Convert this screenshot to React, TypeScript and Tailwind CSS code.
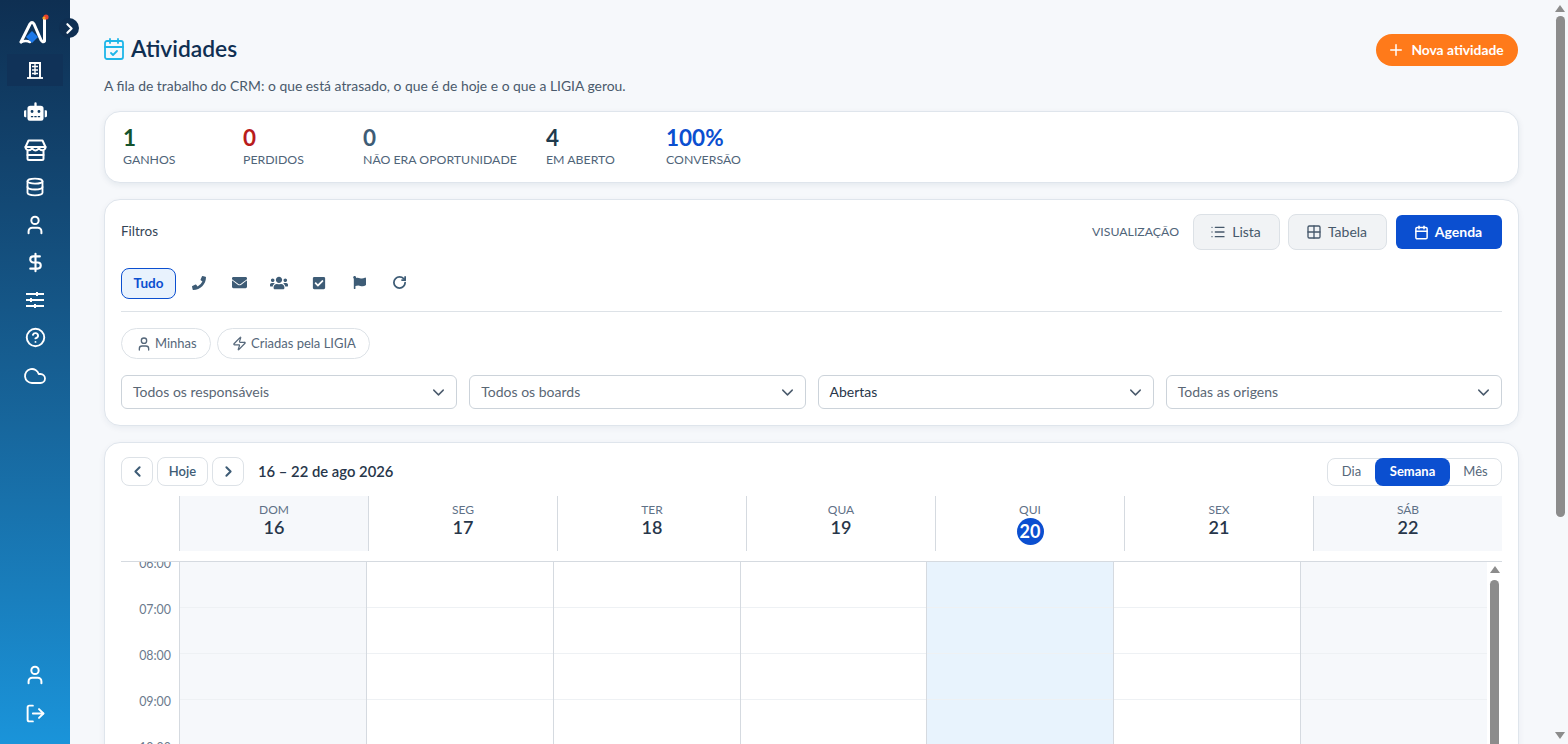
import React from "react";
import { CalendarCheck, Database, User, DollarSign, CircleHelp, Cloud, LogOut, ChevronRight, ChevronLeft, ChevronDown, Plus, List, Grid2x2, Calendar, Zap, RotateCw } from "lucide-react";
import { FaRobot, FaPhoneAlt, FaEnvelope, FaUsers, FaCheckSquare, FaFlag } from "react-icons/fa";

const F = "[font-family:Lato,sans-serif]";

function Stat({ v, l, c, w }: { v: string; l: string; c: string; w: string }) {
  return (
    <div className={w}>
      <div className={`text-[22.5px] leading-[26px] font-bold ${c}`}>{v}</div>
      <div className="mt-[1px] text-[12.3px] leading-[16px] text-[#4f6479] whitespace-nowrap">{l}</div>
    </div>
  );
}

function Sel({ t, dark }: { t: string; dark?: boolean }) {
  return (
    <div className={`flex-1 h-[34px] border border-[#ccd3da] rounded-[6px] bg-white flex items-center justify-between pl-[11px] pr-[8px] text-[14px] ${dark ? "text-[#27364a]" : "text-[#5a6775]"}`}>
      <span className="-mt-[2px]">{t}</span>
      <ChevronDown size={19} strokeWidth={1.8} className="text-[#4a5a6c]" />
    </div>
  );
}

const days = [
  ["DOM", "16", true],
  ["SEG", "17", false],
  ["TER", "18", false],
  ["QUA", "19", false],
  ["QUI", "20", false],
  ["SEX", "21", false],
  ["SÁB", "22", true],
] as const;

const hours = ["06:00", "07:00", "08:00", "09:00", "10:00"];

function Nav({ icon, className = "" }: { icon: React.ReactNode; className?: string }) {
  return <div className={`h-[37.7px] shrink-0 flex items-center justify-center text-white ${className}`}>{icon}</div>;
}

export default function App() {
  return (
    <div className={`h-screen overflow-hidden flex bg-[#f6f8fb] relative ${F}`}>
      <aside className="w-[70px] shrink-0 bg-gradient-to-b from-[#0e2f52] to-[#1a94da] flex flex-col relative">
        <div className="h-[54px] relative shrink-0">
          <svg className="absolute left-[18px] top-[13px]" width="32" height="32" viewBox="0 0 32 32" fill="none">
            <path d="M3 29 L12 11 Q14 8 16 11 L23 27 Q25 30 26.5 28 L26.5 6" stroke="#fff" strokeWidth="3" strokeLinecap="round" strokeLinejoin="round" />
            <path d="M3 29 Q8 27 12 29" stroke="#fff" strokeWidth="2.6" strokeLinecap="round" />
            <path d="M8 24 L14 18 L20 24 L14 30 Z" fill="#1d78e8" />
            <circle cx="28" cy="4" r="2.6" fill="#e8422a" />
            <circle cx="26" cy="5" r="1.6" fill="#f6a623" />
          </svg>
          <div className="absolute left-[59px] top-[18px] w-[20px] h-[20px] rounded-full bg-[#0f2f52] flex items-center justify-center z-10">
            <ChevronRight size={17} strokeWidth={3} className="text-white" />
          </div>
        </div>
        <div className="mx-[7px] h-[32px] bg-[#103258] flex items-center justify-center text-white shrink-0">
          <svg width="16" height="18" viewBox="0 0 16 18" fill="none" stroke="#fff">
            <path d="M3 17V2h10v15" strokeWidth="2" />
            <path d="M0 17h16" strokeWidth="1.8" />
            <path d="M5 5.5h6M5 9h6M5 12.5h6M8 3v11" strokeWidth="1.4" />
          </svg>
        </div>
        <div className="h-[7px] shrink-0" />
        <Nav icon={<FaRobot size={23} />} />
        <Nav
          icon={
            <svg width="23" height="22" viewBox="0 0 23 22" fill="none" stroke="#fff" strokeWidth="2" strokeLinejoin="round" strokeLinecap="round">
              <path d="M4.5 1.5h14l3 6.5H1.5z" />
              <path d="M1.5 8a3.3 3.3 0 0 0 6.6 0 3.4 3.4 0 0 0 6.8 0 3.3 3.3 0 0 0 6.6 0" />
              <path d="M3.5 12v7.5a1.5 1.5 0 0 0 1.5 1.5h13a1.5 1.5 0 0 0 1.5-1.5V12" />
              <path d="M3.5 16h16" />
            </svg>
          }
        />
        <Nav icon={<Database size={20} strokeWidth={2.2} />} />
        <Nav icon={<User size={22} strokeWidth={2.2} />} />
        <Nav icon={<DollarSign size={21} strokeWidth={2.4} />} />
        <Nav
          icon={
            <svg width="20" height="18" viewBox="0 0 20 18" fill="none" stroke="#fff" strokeWidth="2">
              <path d="M1 3h18M1 9h18M1 15h18" />
              <path d="M12 1v4M6 7v4M10 13v4" />
            </svg>
          }
        />
        <Nav icon={<CircleHelp size={21} strokeWidth={2.2} />} />
        <Nav icon={<Cloud size={24} strokeWidth={1.8} />} />
        <div className="flex-1" />
        <Nav icon={<User size={22} strokeWidth={2.2} />} />
        <Nav icon={<LogOut size={21} strokeWidth={2.2} />} className="mb-[12px]" />
      </aside>

      <main className="flex-1 min-w-0 pl-[34px] pr-[49px] pt-[32px]">
        <div className="flex items-start justify-between h-[36px]">
          <div className="flex items-center gap-[5px] h-[34px]">
            <CalendarCheck size={24} strokeWidth={1.8} className="text-[#1fb6e8] -ml-[2px]" />
            <h1 className="text-[22.8px] font-semibold text-[#0f2f52] leading-[34px] -mt-[2px]">Atividades</h1>
          </div>
          <button className="h-[32px] mt-[2px] mr-[1px] w-[142px] pr-[3px] rounded-full bg-[#ff7a1a] text-white text-[13.8px] font-bold flex items-center justify-center gap-[6px]">
            <Plus size={18} />Nova atividade
          </button>
        </div>
        <p className="text-[13.9px] leading-[20px] text-[#4a5a6c] mt-[8px] whitespace-nowrap">A fila de trabalho do CRM: o que está atrasado, o que é de hoje e o que a LIGIA gerou.</p>

        <section className="mt-[15px] h-[72px] bg-white rounded-[16px] border border-[#dfe5ec] shadow-[0_2px_6px_rgba(15,47,82,0.08)] flex pl-[18px] pt-[13px]">
          <Stat v="1" l="GANHOS" c="text-[#14532d]" w="w-[120px]" />
          <Stat v="0" l="PERDIDOS" c="text-[#b91c1c]" w="w-[120px]" />
          <Stat v="0" l="NÃO ERA OPORTUNIDADE" c="text-[#3e5c76]" w="w-[183px]" />
          <Stat v="4" l="EM ABERTO" c="text-[#1f3a4d]" w="w-[120px]" />
          <Stat v="100%" l="CONVERSÃO" c="text-[#0b4fd0]" w="w-[100px]" />
        </section>

        <section className="mt-[16px] bg-white rounded-[16px] border border-[#dfe5ec] shadow-[0_2px_6px_rgba(15,47,82,0.06)] px-[16px] pt-[14px] h-[227px]">
          <div className="flex items-center justify-between h-[36px]">
            <span className="text-[13.5px] leading-[18px] -mt-[2px] text-[#344556]">Filtros</span>
            <div className="flex items-center">
              <span className="text-[12.3px] text-[#4f6479] mr-[14px]">VISUALIZAÇÃO</span>
              <button className="h-[36px] w-[87px] pr-[2px] rounded-[8px] border border-[#dce1e6] bg-[#f1f3f5] text-[#46586b] text-[14px] flex items-center justify-center gap-[6px] mr-[8px]"><List size={16} /><span className="-mt-[2px]">Lista</span></button>
              <button className="h-[36px] w-[99px] pr-[2px] rounded-[8px] border border-[#dce1e6] bg-[#f1f3f5] text-[#46586b] text-[14px] flex items-center justify-center gap-[6px] mr-[9px]"><Grid2x2 size={16} /><span className="-mt-[2px]">Tabela</span></button>
              <button className="h-[34px] w-[106px] pr-[2px] rounded-[6px] bg-[#0b4fd0] text-white text-[14px] font-bold flex items-center justify-center gap-[6px]"><Calendar size={15} strokeWidth={2.4} /><span className="-mt-[2px]">Agenda</span></button>
            </div>
          </div>
          <div className="mt-[18px] flex items-center h-[31px]">
            <button className="w-[55px] h-[31px] rounded-[8px] border border-[#0b4fd0] bg-[#e8f2fd] text-[#0b4fd0] text-[13.5px] font-bold">Tudo</button>
            <div className="flex text-[#3e5c76] items-center -translate-y-px">
              <span className="w-[46px] flex justify-center"><FaPhoneAlt size={14} className="-scale-x-100" /></span>
              <span className="w-[34px] flex justify-center"><FaEnvelope size={15} /></span>
              <span className="w-[46px] flex justify-center"><FaUsers size={18} /></span>
              <span className="w-[34px] flex justify-center"><FaCheckSquare size={14} /></span>
              <span className="w-[46px] flex justify-center"><FaFlag size={13} /></span>
              <span className="w-[34px] flex justify-center"><RotateCw size={15} strokeWidth={2.8} /></span>
            </div>
          </div>
          <div className="mt-[12px] border-t border-[#dde2e7]" />
          <div className="mt-[16px] flex gap-[6px]">
            <div className="h-[31px] rounded-full border border-[#dde2e7] pl-[14px] w-[90px] flex items-center gap-[3px] text-[13px] text-[#55677a]"><User size={16} />Minhas</div>
            <div className="h-[31px] rounded-full border border-[#dde2e7] pl-[14px] w-[153px] flex items-center gap-[4px] text-[13px] text-[#55677a]"><Zap size={15} />Criadas pela LIGIA</div>
          </div>
          <div className="mt-[16px] flex gap-[12px]">
            <Sel t="Todos os responsáveis" />
            <Sel t="Todos os boards" />
            <Sel t="Abertas" dark />
            <Sel t="Todas as origens" />
          </div>
        </section>

        <section className="mt-[16px] bg-white rounded-[16px] border border-[#dfe5ec] shadow-[0_2px_6px_rgba(15,47,82,0.06)] px-[16px] pt-[14px] h-[800px]">
          <div className="flex items-center justify-between h-[29px]">
            <div className="flex items-center">
              <button className="w-[32px] h-[29px] rounded-[8px] border border-[#dde2e7] flex items-center justify-center text-[#3e5c76]"><ChevronLeft size={17} strokeWidth={2.8} /></button>
              <button className="w-[51px] h-[29px] ml-[4px] rounded-[8px] border border-[#dde2e7] text-[13px] text-[#3e5c76] font-semibold">Hoje</button>
              <button className="w-[32px] h-[29px] ml-[4px] rounded-[8px] border border-[#dde2e7] flex items-center justify-center text-[#3e5c76]"><ChevronRight size={17} strokeWidth={2.8} /></button>
              <span className="ml-[14px] text-[14.8px] font-semibold text-[#27364a]">16 – 22 de ago 2026</span>
            </div>
            <div className="h-[28px] w-[175px] rounded-[8px] border border-[#dde2e7] flex items-center text-[13px] text-[#55677a]">
              <span className="w-[47px] text-center">Dia</span>
              <span className="w-[75px] h-[28px] rounded-[8px] bg-[#0b4fd0] text-white font-bold flex items-center justify-center">Semana</span>
              <span className="flex-1 text-center">Mês</span>
            </div>
          </div>

          <div className="mt-[10px] h-[55px] flex pl-[58px]">
            {days.map(([d, n, w]) => (
              <div key={d} className={`flex-1 border-l border-[#d5dae0] flex flex-col items-center pt-[6px] ${w ? "bg-[#f6f8fb]" : ""}`}>
                <span className="text-[12px] leading-[15px] text-[#5f7187]">{d}</span>
                {d === "QUI" ? (
                  <span className="mt-[1px] w-[27px] h-[27px] rounded-full bg-[#0b4fd0] text-white text-[18px] font-bold flex items-center justify-center">{n}</span>
                ) : (
                  <span className="text-[18px] leading-[20px] font-semibold text-[#27364a]">{n}</span>
                )}
              </div>
            ))}
          </div>

          <div className="relative mt-[10px] h-[600px] overflow-hidden border-t border-[#d5dae0] pr-[15px]">
            <div className="flex h-full">
              <div className="w-[58px] shrink-0">
                {hours.map((h, i) => (
                  <div key={h} className={`relative ${i ? "h-[46px]" : "h-[45px]"}`}>
                    <span className={`absolute right-[8px] text-[12.4px] leading-[16px] text-[#6b7a8d] ${i ? "top-[-5px]" : "top-[-6px]"}`}>{h}</span>
                  </div>
                ))}
              </div>
              {days.map(([d, , w]) => (
                <div key={d} className={`flex-1 border-l border-[#d5dae0] ${d === "QUI" ? "bg-[#e8f3fd]" : w ? "bg-[#f6f8fb]" : ""}`}>
                  {hours.map((h, i) => (
                    <div key={h} className={i ? "h-[46px] border-t border-[#eef1f4]" : "h-[45px]"} />
                  ))}
                </div>
              ))}
            </div>
            <div className="absolute right-[3px] top-[18px] w-[9px] h-[500px] rounded-full bg-[#8c8c8c]" />
            <div className="absolute right-[2px] top-[4px] w-0 h-0 border-x-[5px] border-x-transparent border-b-[7px] border-b-[#8c8c8c]" />
          </div>
        </section>
      </main>

      <div className="absolute right-[3px] top-[16px] w-[9px] h-[501px] rounded-full bg-[#8c8c8c]" />
      <div className="absolute right-[3px] top-[5px] w-0 h-0 border-x-[5px] border-x-transparent border-b-[7px] border-b-[#8c8c8c]" />
      <div className="absolute right-[3px] bottom-[5px] w-0 h-0 border-x-[5px] border-x-transparent border-t-[7px] border-t-[#8c8c8c]" />
    </div>
  );
}
